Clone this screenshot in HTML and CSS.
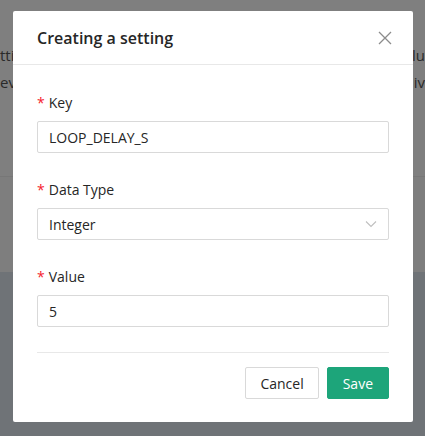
FILE: index.html
```html
<!DOCTYPE html>
<html>
<head>
<meta charset="utf-8">
<link rel="stylesheet" href="styles.css">
</head>
<body>
<div class="page">
  <div class="bg-row bg-row-a"><span class="bg-l">tti</span><span class="bg-r">lu</span></div>
  <div class="bg-row bg-row-b"><span class="bg-l">eve</span><span class="bg-r">iv</span></div>
  <div class="bg-spacer"></div>
  <div class="bg-band"></div>
  <div class="bg-foot"></div>
</div>
<div class="mask"></div>
<div class="wrap">
  <div class="modal">
    <div class="modal-header">
      <div class="modal-title">Creating a setting</div>
      <svg class="close" width="14" height="14" viewBox="0 0 14 14"><path d="M1 1 L13 13 M13 1 L1 13" stroke="#8c8c8c" stroke-width="1.3" fill="none"/></svg>
    </div>
    <div class="modal-body">
      <div class="field">
        <label class="label"><span class="req">*</span>Key</label>
        <div class="input">LOOP_DELAY_S</div>
      </div>
      <div class="field">
        <label class="label"><span class="req">*</span>Data Type</label>
        <div class="input select">Integer
          <svg class="arrow" width="12" height="8" viewBox="0 0 12 8"><path d="M1 1.5 L6 6.5 L11 1.5" stroke="#bfbfbf" stroke-width="1.1" fill="none"/></svg>
        </div>
      </div>
      <div class="field">
        <label class="label"><span class="req">*</span>Value</label>
        <div class="input">5</div>
      </div>
    </div>
    <div class="modal-footer">
      <button class="btn">Cancel</button>
      <button class="btn btn-primary">Save</button>
    </div>
  </div>
</div>
</body>
</html>
```

FILE: styles.css
```css
html, body {
  margin: 0;
  padding: 0;
}
body {
  width: 425px;
  height: 436px;
  overflow: hidden;
  font-family: "Open Sans", "Noto Sans", sans-serif;
  background: #ffffff;
  position: relative;
}
.page {
  display: flex;
  flex-direction: column;
  height: 436px;
}
.bg-row {
  display: flex;
  justify-content: space-between;
  font-size: 15px;
  line-height: 20px;
  color: #555;
  height: 27px;
  align-items: center;
  white-space: nowrap;
}
.bg-row-a { margin-top: 41px; }
.bg-spacer {
  height: 81px;
  border-bottom: 1px solid #eee;
}
.bg-band {
  height: 95px;
  background: #fdfdfd;
}
.bg-foot {
  flex: 1;
  background: #dfe6ee;
}
.mask {
  position: absolute;
  inset: 0;
  background: rgba(0, 0, 0, 0.5);
}
.wrap {
  position: absolute;
  left: 13px;
  top: 11px;
  width: 400px;
}
.modal {
  background: #fff;
  border-radius: 2px;
  height: 411px;
  display: flex;
  flex-direction: column;
}
.modal-header {
  height: 54px;
  box-sizing: border-box;
  border-bottom: 1px solid #e8e8e8;
  padding: 0 21px 0 24px;
  display: flex;
  align-items: center;
  justify-content: space-between;
}
.modal-title {
  font-size: 16px;
  font-weight: 600;
  color: #262626;
}
.close { display: block; }
.modal-body {
  padding: 28px 24px 0 24px;
  display: flex;
  flex-direction: column;
  gap: 27px;
}
.field {
  display: flex;
  flex-direction: column;
  gap: 8px;
}
.label {
  font-size: 14px;
  color: #262626;
  line-height: 20px;
}
.req {
  color: #f5222d;
  margin-right: 4px;
  font-size: 14px;
}
.input {
  height: 32px;
  box-sizing: border-box;
  border: 1px solid #d9d9d9;
  border-radius: 2px;
  padding: 0 11px;
  font-size: 14px;
  color: #262626;
  display: flex;
  align-items: center;
  justify-content: space-between;
}
.modal-footer {
  margin: 25px 24px 0 24px;
  border-top: 1px solid #e8e8e8;
  padding-top: 14px;
  display: flex;
  justify-content: flex-end;
  gap: 8px;
}
.btn {
  height: 32px;
  padding: 0 14px;
  font-family: inherit;
  font-size: 14px;
  border: 1px solid #d9d9d9;
  background: #fff;
  color: #262626;
  border-radius: 2px;
}
.btn-primary {
  background: #1da57a;
  border-color: #1da57a;
  color: #fff;
  padding: 0 15px;
}
```
